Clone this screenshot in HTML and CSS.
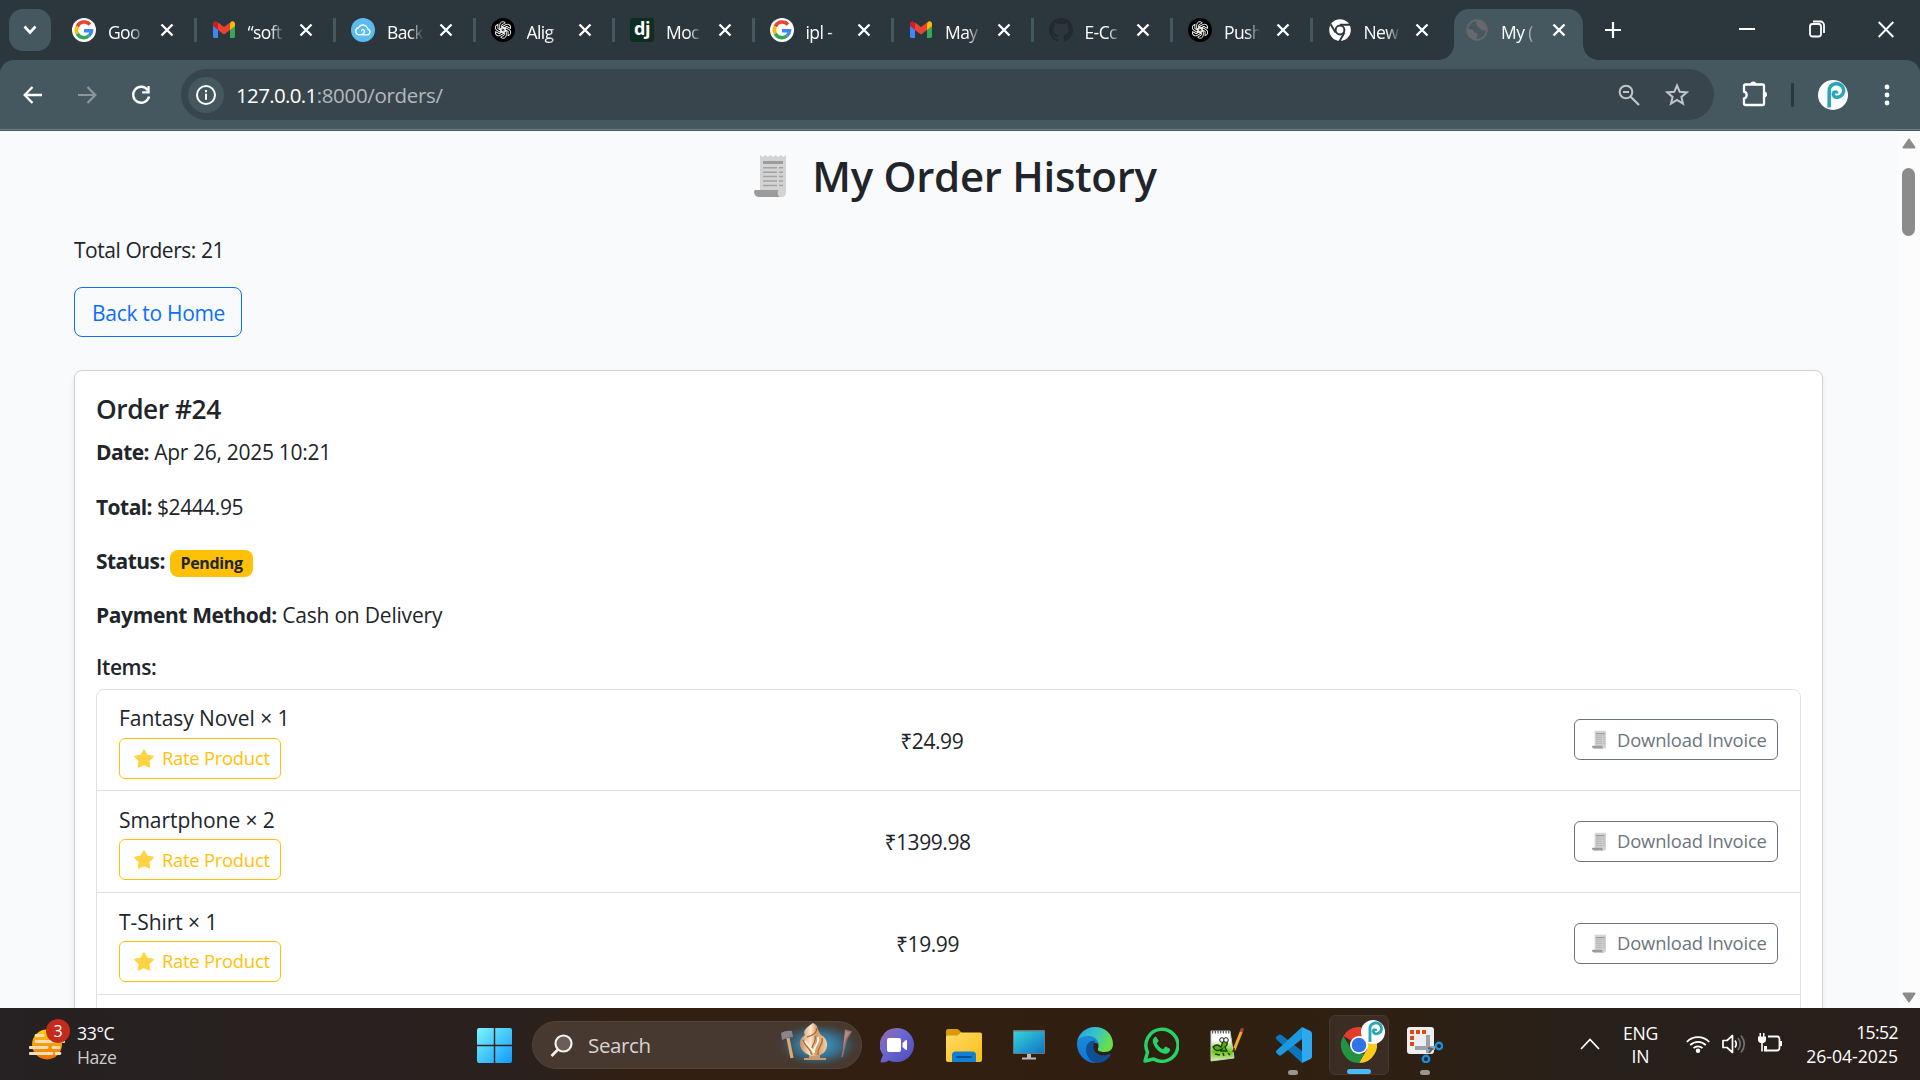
FILE: index.html
```html
<!DOCTYPE html>
<html lang="en">
<head>
<meta charset="utf-8">
<title>My Order History</title>
<link rel="stylesheet" href="styles.css">
</head>
<body>
<svg class="defs" width="0" height="0">
  <defs>
    <symbol id="close" viewBox="0 0 14 14"><path d="M1.5 1.5l11 11M12.5 1.5l-11 11" stroke="#fff" stroke-width="2.3" fill="none"/></symbol>
    <symbol id="google" viewBox="0 0 24 24"><circle cx="12" cy="12" r="12" fill="#fff"/><g fill="none" stroke-width="3.5"><path d="M17.9 6.6A7.6 7.6 0 0 0 5.3 8.4" stroke="#ea4335"/><path d="M5.3 8.4a7.6 7.6 0 0 0 0 7.2" stroke="#fbbc05"/><path d="M5.3 15.6a7.6 7.6 0 0 0 11.7 2.2" stroke="#34a853"/><path d="M17 17.8a7.6 7.6 0 0 0 2.500-5H12" stroke="#4285f4"/></g></symbol>
    <symbol id="gmail" viewBox="0 0 24 24"><path d="M1 7v11.500a1.600 1.600 0 0 0 1.600 1.600H6V9z" fill="#4285f4"/><path d="M23 7v11.500a1.600 1.600 0 0 1-1.600 1.600H18V9z" fill="#34a853"/><path d="M18 5.500V12l5-4V5.800c0-2.400-2.700-3.200-4.200-2z" fill="#fbbc04"/><path d="M6 5.500V12L1 8V5.800c0-2.400 2.700-3.200 4.200-2z" fill="#c5221f"/><path d="M6 12V4.500l6 4.600 6-4.600V12l-6 4.600z" fill="#ea4335"/></symbol>
    <symbol id="cloud" viewBox="0 0 24 24"><circle cx="12" cy="12" r="12" fill="#5bbcf0"/><path d="M8 16.800h8.300a2.900 2.900 0 0 0 .5-5.700A4.900 4.900 0 0 0 7.600 9.700 3.600 3.600 0 0 0 8 16.800zM8 16.800c4 0 5.600-1.700 5.300-3.800-.4-2-3.300-1.600-2.600.4" fill="none" stroke="#fff" stroke-width="1.300"/></symbol>
    <symbol id="gpt" viewBox="0 0 24 24"><circle cx="12" cy="12" r="12" fill="#000"/><g fill="none" stroke="#fff" stroke-width=".9"><path id="petal" d="M12.200 9.200 8.700 11.200V6.900a3.200 3.200 0 0 1 5.600-2.100L10.700 6.900v5.400"/><use href="#petal" transform="rotate(60 12 12)"/><use href="#petal" transform="rotate(120 12 12)"/><use href="#petal" transform="rotate(180 12 12)"/><use href="#petal" transform="rotate(240 12 12)"/><use href="#petal" transform="rotate(300 12 12)"/></g></symbol>
    <symbol id="github" viewBox="0 0 16 16"><path fill="#24292f" d="M8 0C3.580 0 0 3.580 0 8c0 3.540 2.290 6.530 5.470 7.590.4.070.55-.17.55-.38v-1.490c-2.010.37-2.530-.49-2.690-.94-.09-.23-.48-.94-.82-1.130-.28-.15-.68-.52-.01-.53.63-.01 1.080.58 1.230.82.72 1.210 1.870.87 2.330.66.070-.52.28-.87.51-1.070-1.780-.2-3.640-.89-3.640-3.950 0-.87.31-1.590.82-2.150-.08-.2-.36-1.020.08-2.120 0 0 .67-.21 2.200.82a7.400 7.400 0 0 1 4 0c1.530-1.040 2.200-.82 2.200-.82.44 1.100.16 1.920.08 2.120.51.56.82 1.270.82 2.150 0 3.070-1.870 3.750-3.650 3.950.29.25.54.73.54 1.480v2.200c0 .21.15.46.55.38A8 8 0 0 0 16 8c0-4.420-3.580-8-8-8z"/></symbol>
    <symbol id="chromew" viewBox="0 0 24 24"><circle cx="12" cy="12" r="10.800" fill="#fff"/><circle cx="12" cy="12" r="4.400" fill="none" stroke="#2c373d" stroke-width="2"/><path d="M12 6.800h10M7.500 14.600 2.600 6.200M16.500 14.600l-5 8.600" stroke="#2c373d" stroke-width="1.900"/></symbol>
    <symbol id="globe" viewBox="0 0 24 24"><circle cx="12" cy="12" r="9.800" fill="none" stroke="#68686b" stroke-width="1.800"/><path d="M3 11c4 0 6 1 6.500 3.500 2 0 3.500 1 3 3.500-.5 2-1.500 2.500-1.500 4C6 21.500 2.500 18 3 11zM12 2.500c-1 1.500-1.500 3-.5 4 1.500 1 .5 2.500 2 3 2 .5 2.500 3 4.500 3 1.500-.5 2.500-.5 3.500 0C22 6.500 17 2 12 2.500z" fill="#68686b"/></symbol>
    <symbol id="receipt" viewBox="0 0 32 42"><path d="M6 0l2.600 2L11.200 0l2.600 2 2.600-2L19 2l2.600-2 2.600 2 2.600-2 2.600 2L32 0v37c0 3-1.500 5-4 5h-4L6 35z" fill="#d3d3d3"/><path d="M2 35h22.500c-1.500 2-1 5 1 7H5c-4 0-5-4-5-5.500C0 35.500 1 35 2 35z" fill="#9b9b9b"/><path d="M9 6h20v3H9z" fill="#9b9b9b"/><path d="M9 12.800h14M25 12.800h4M9 17.200h14M25 17.200h4M9 21.600h14M25 21.600h4M9 26h14M25 26h4M9 30.500h14M25 30.500h4" stroke="#a3a3a3" stroke-width="1.500"/></symbol>
    <symbol id="star" viewBox="0 0 20 19"><path d="M10 1.500l2.600 5.200 5.900.9-4.200 4.100.9 5.800-5.200-2.700-5.200 2.700.9-5.800L1.500 7.600l5.900-.9z" fill="#fdd441" stroke="#fdd441" stroke-width="2.200" stroke-linejoin="round"/></symbol>
    <symbol id="pfav" viewBox="0 0 30 30"><circle cx="15" cy="15" r="15" fill="#fff"/><path d="M11.200 27.500V11.500a7.300 6.900 0 1 1 8.500 5.800c-3 .3-5-1.800-4.300-4 .5-1.700 3.200-1.700 3.300.2" fill="none" stroke="#2aa6b6" stroke-width="3.600"/></symbol>
    <linearGradient id="gw" x1="0" y1="0" x2="1" y2="1"><stop stop-color="#7df4fc"/><stop offset="1" stop-color="#0f9bfb"/></linearGradient>
    <linearGradient id="gsun" x1="0" y1="0" x2="0" y2="1"><stop stop-color="#ffcf0a"/><stop offset="1" stop-color="#ee6f06"/></linearGradient>
    <linearGradient id="gchat" x1="0" y1="0" x2="1" y2="1"><stop stop-color="#a566a4"/><stop offset=".4" stop-color="#6a68d0"/><stop offset="1" stop-color="#4e4bc0"/></linearGradient>
    <linearGradient id="gfold" x1="0" y1="0" x2="1" y2="1"><stop stop-color="#ffdb6a"/><stop offset="1" stop-color="#fbbd12"/></linearGradient>
    <linearGradient id="gmon" x1="0" y1="0" x2="1" y2="1"><stop stop-color="#33d5dc"/><stop offset="1" stop-color="#1173c4"/></linearGradient>
    <linearGradient id="gedge" x1="0" y1="0" x2="1" y2=".4"><stop stop-color="#1c9fe0"/><stop offset=".5" stop-color="#35c1d0"/><stop offset="1" stop-color="#66e04a"/></linearGradient>
    <linearGradient id="gedge2" x1="0" y1="0" x2="0" y2="1"><stop stop-color="#1a8ad8"/><stop offset="1" stop-color="#0c76d6"/></linearGradient>
    <radialGradient id="gglow"><stop stop-color="#3f9fd0"/><stop offset=".5" stop-color="#39708f"/><stop offset=".8" stop-color="#3f4a4e" stop-opacity=".8"/><stop offset="1" stop-color="#463830" stop-opacity="0"/></radialGradient>
    <linearGradient id="gart" x1="0" y1="0" x2="1" y2="0"><stop stop-color="#c98a5a"/><stop offset=".4" stop-color="#ffe9cc"/><stop offset=".6" stop-color="#d79a66"/><stop offset="1" stop-color="#f3cfa6"/></linearGradient>
    <linearGradient id="gnpp" x1="0" y1="0" x2="0" y2="1"><stop offset=".3" stop-color="#fff"/><stop offset=".7" stop-color="#6cc713"/><stop offset="1" stop-color="#d9f0b0"/></linearGradient>
  </defs>
</svg>

<header class="tabstrip">
  <div class="tabsearch"><svg width="14" height="10" viewBox="0 0 14 10"><path d="M1.500 1.500 7 7.500l5.500-6" fill="none" stroke="#fff" stroke-width="2.600"/></svg></div>
  <nav class="tabs">
    <div class="tab"><svg class="fav"><use href="#google"/></svg><span class="label">Goo</span><svg class="x"><use href="#close"/></svg></div>
    <div class="tab"><svg class="fav"><use href="#gmail"/></svg><span class="label">“soft</span><svg class="x"><use href="#close"/></svg></div>
    <div class="tab"><svg class="fav"><use href="#cloud"/></svg><span class="label">Back</span><svg class="x"><use href="#close"/></svg></div>
    <div class="tab"><svg class="fav"><use href="#gpt"/></svg><span class="label">Alig</span><svg class="x"><use href="#close"/></svg></div>
    <div class="tab"><span class="fav dj">dj</span><span class="label">Moc</span><svg class="x"><use href="#close"/></svg></div>
    <div class="tab"><svg class="fav"><use href="#google"/></svg><span class="label">ipl -</span><svg class="x"><use href="#close"/></svg></div>
    <div class="tab"><svg class="fav"><use href="#gmail"/></svg><span class="label">May</span><svg class="x"><use href="#close"/></svg></div>
    <div class="tab"><svg class="fav"><use href="#github"/></svg><span class="label">E-Cc</span><svg class="x"><use href="#close"/></svg></div>
    <div class="tab"><svg class="fav"><use href="#gpt"/></svg><span class="label">Push</span><svg class="x"><use href="#close"/></svg></div>
    <div class="tab last"><svg class="fav"><use href="#chromew"/></svg><span class="label">New</span><svg class="x"><use href="#close"/></svg></div>
    <div class="tab active"><svg class="fav"><use href="#globe"/></svg><span class="label">My (</span><svg class="x"><use href="#close"/></svg></div>
  </nav>
  <svg class="newtab" width="16" height="16" viewBox="0 0 16 16"><path d="M8 0v16M0 8h16" stroke="#fff" stroke-width="2.200"/></svg>
  <div class="wincontrols">
    <svg width="16" height="18" viewBox="0 0 16 18"><path d="M0 9h16" stroke="#fff" stroke-width="2"/></svg>
    <svg width="16" height="18" viewBox="0 0 16 18"><rect x="1" y="4" width="11" height="12.500" rx="2.500" fill="none" stroke="#fff" stroke-width="1.800"/><path d="M4 1.500h7.500A3.500 3.500 0 0 1 15 5v8" fill="none" stroke="#fff" stroke-width="1.800"/></svg>
    <svg width="16" height="18" viewBox="0 0 16 18"><path d="M.7 2l14.600 15M15.300 2l-14.600 15" stroke="#fff" stroke-width="1.900"/></svg>
  </div>
</header>

<div class="toolbar">
  <svg class="back" width="20" height="18" viewBox="0 0 20 18"><path d="M19 9H2M9.500 1 1.700 9l7.800 8" fill="none" stroke="#fff" stroke-width="2.300"/></svg>
  <svg class="fwd" width="20" height="18" viewBox="0 0 20 18"><path d="M1 9h17M10.500 1l7.800 8-7.800 8" fill="none" stroke="#8b979d" stroke-width="2.200"/></svg>
  <svg class="reload" width="20" height="20" viewBox="0 0 20 20"><path d="M16.800 5.200A8 8 0 1 0 18 11.500" fill="none" stroke="#fff" stroke-width="2.400"/><path d="M18.700 1v7.500h-7.500V6.200h5.200V1z" fill="#fff"/></svg>
  <div class="omnibox">
    <div class="info"><svg width="20" height="20" viewBox="0 0 20 20"><circle cx="10" cy="10" r="9" fill="none" stroke="#fff" stroke-width="2"/><path d="M10 8.800v6M10 5v2.200" stroke="#fff" stroke-width="2"/></svg></div>
    <div class="url"><b>127.0.0.1</b><span>:8000/orders/</span></div>
    <svg class="zoomout" width="22" height="22" viewBox="0 0 22 22"><circle cx="8" cy="8" r="6.300" fill="none" stroke="#c3c6c8" stroke-width="2"/><path d="M12.700 12.700 21 21M5 8h6" stroke="#c3c6c8" stroke-width="2.200"/></svg>
    <svg class="bookmark" width="24" height="23" viewBox="0 0 24 23"><path d="M12 2.500l2.700 6.300 6.900.6-5.200 4.500 1.600 6.700-6-3.600-6 3.600 1.600-6.700-5.200-4.500 6.900-.6z" fill="none" stroke="#c3c6c8" stroke-width="2"/></svg>
  </div>
  <svg class="ext" width="26" height="26" viewBox="0 0 26 26"><path d="M2.500 3.500h18q1.500 0 1.500 1.500v17.500q0 1.500-1.500 1.500h-17Q2 24 2 22.500v-5a3.500 3.500 0 0 0 0-6.800V5q0-1.500 1.500-1.500z" fill="none" stroke="#fff" stroke-width="2.300"/><path d="M8.300 3.500a3 3 0 0 1 6 0zM22 10.500a3 3 0 0 1 0 6z" fill="#fff"/></svg>
  <i class="sep"></i>
  <svg class="avatar" width="30" height="30"><use href="#pfav"/></svg>
  <svg class="menu" width="6" height="22" viewBox="0 0 6 22"><g fill="#fff"><circle cx="3" cy="3" r="2.400"/><circle cx="3" cy="11" r="2.400"/><circle cx="3" cy="19" r="2.400"/></g></svg>
</div>

<div class="viewport">
  <main class="page">
    <h1><svg width="32" height="42"><use href="#receipt"/></svg><span>My Order History</span></h1>
    <p class="count">Total Orders: 21</p>
    <a class="home">Back to Home</a>
    <section class="card">
      <h2>Order #24</h2>
      <p class="date"><strong>Date:</strong> Apr 26, 2025 10:21</p>
      <p class="total"><strong>Total:</strong> $2444.95</p>
      <p class="status"><strong>Status:</strong> <em>Pending</em></p>
      <p class="pay"><strong>Payment Method:</strong> Cash on Delivery</p>
      <h3>Items:</h3>
      <ul class="items">
        <li><div class="prod"><span>Fantasy Novel × 1</span><a class="rate"><svg width="20" height="19"><use href="#star"/></svg>Rate Product</a></div><span class="price">₹24.99</span><a class="invoice"><svg width="14" height="19" viewBox="0 0 32 42"><use href="#receipt" width="32" height="42"/></svg>Download Invoice</a></li>
        <li><div class="prod"><span>Smartphone × 2</span><a class="rate"><svg width="20" height="19"><use href="#star"/></svg>Rate Product</a></div><span class="price">₹1399.98</span><a class="invoice"><svg width="14" height="19" viewBox="0 0 32 42"><use href="#receipt" width="32" height="42"/></svg>Download Invoice</a></li>
        <li><div class="prod"><span>T-Shirt × 1</span><a class="rate"><svg width="20" height="19"><use href="#star"/></svg>Rate Product</a></div><span class="price">₹19.99</span><a class="invoice"><svg width="14" height="19" viewBox="0 0 32 42"><use href="#receipt" width="32" height="42"/></svg>Download Invoice</a></li>
        <li></li>
      </ul>
    </section>
  </main>
  <aside class="scrollbar">
    <svg width="14" height="11" viewBox="0 0 14 11"><path d="M7 1.500 12.500 9.500h-11z" fill="#8b8b8b" stroke="#8b8b8b" stroke-width="2" stroke-linejoin="round"/></svg>
    <i></i>
    <svg class="down" width="14" height="11" viewBox="0 0 14 11"><path d="M7 9.500 1.500 1.500h11z" fill="#8b8b8b" stroke="#8b8b8b" stroke-width="2" stroke-linejoin="round"/></svg>
  </aside>
</div>

<footer class="taskbar">
  <div class="weather">
    <div class="sun">
      <svg width="36" height="32" viewBox="0 0 36 32"><circle cx="18" cy="15.500" r="15" fill="url(#gsun)"/><path d="M7 6.500h7M7 12.500h28M1 18.500h17M24 18.500h6M1 24.500h22M27 24.500h4" stroke="#f6dfb8" stroke-width="2.800" stroke-linecap="round"/></svg>
      <b>3</b>
    </div>
    <div class="wtext"><span>33°C</span><span>Haze</span></div>
  </div>
  <div class="apps">
    <svg class="start" width="35" height="35" viewBox="0 0 35 35"><path d="M2 0h14.800v16.800H0V2q0-2 2-2zM18.200 0H33q2 0 2 2v14.800H18.200zM0 18.200h16.800V35H2q-2 0-2-2zM18.200 18.200H35V33q0 2-2 2H18.200z" fill="url(#gw)"/></svg>
    <div class="search">
      <svg class="mag" width="23" height="23" viewBox="0 0 23 23"><circle cx="13.500" cy="9.500" r="8" fill="#6b5e56" stroke="#f2f2f2" stroke-width="2.200"/><path d="M8 15.500 1.500 22" stroke="#f2f2f2" stroke-width="2.600"/></svg>
      <span>Search</span>
      <svg class="art" width="84" height="46" viewBox="0 0 84 46"><ellipse cx="42" cy="23" rx="42" ry="23" fill="url(#gglow)"/><path d="M12 16l4 20" stroke="#d9ab72" stroke-width="3.200"/><path d="M5 11q5-3 11-2l1 6q-6 0-11 3z" fill="#87868f"/><path d="M69 8l6 2-4 6-1 3-4 16" fill="#b58a83" stroke="#94706c" stroke-width="1.500"/><path d="M28 36h22v2H28zM33 32h11v6H33z" fill="#c79a70"/><path d="M37 1c6 2 4 8 8 12 4 2 7 7 6 11-1 8-8 10-13 10s-13-4-14-11c-1-5 2-8 5-10-3-4 2-8 8-12z" fill="url(#gart)"/><path d="M31 15c8-2 10-6 10-9M27 18c2 7 8 8 9 15M39 14c2 7-5 9-4 18M46 16c2 7-5 8-4 17" fill="none" stroke="#a66b3b" stroke-width="1.300"/><path d="M29 19c3 5 6 6 8 11M42 15c2 7-5 9-4 16" fill="none" stroke="#fff5e6" stroke-width="1.800"/></svg>
    </div>
    <svg class="chat" width="34" height="35" viewBox="0 0 34 35"><path d="M17 0a17 17 0 0 1 0 34Q12 34 9 32.500 5 35 1.500 34.500.3 34.300.8 32.500L3 27A17 17 0 0 1 17 0z" fill="url(#gchat)"/><rect x="7" y="10" width="14" height="14" rx="2" fill="#fff"/><path d="M22.500 15l3.500-3q1-.5 1 1v8q0 1.500-1 1l-3.500-3z" fill="#fff"/></svg>
    <svg class="folder" width="36" height="33" viewBox="0 0 36 33"><path d="M0 2q0-2 2-2h9q1 0 2 1l3 3v8H0z" fill="#d99a0b"/><path d="M0 8q0-1.500 1.500-1.500h10L15 3.500h19q2 0 2 2V31q0 2-2 2H2q-2 0-2-2z" fill="url(#gfold)"/><path d="M6 33v-7q0-3.500 3.500-3.500h17q3.500 0 3.500 3.500v7z" fill="#127fd3"/><path d="M11 28h14" stroke="#074f91" stroke-width="1.800" stroke-linecap="round"/></svg>
    <svg class="monitor" width="32" height="30" viewBox="0 0 32 30"><rect width="32" height="24" rx="1" fill="#71767b"/><rect x="1" y="1.500" width="30" height="21.500" fill="url(#gmon)"/><path d="M14 24h4v3.500h5V29.500H9v-2h5z" fill="#b8bcc0"/></svg>
    <svg class="edge" width="36" height="36" viewBox="0 0 36 36"><path d="M18 0C8 0 1.500 7 0 15c0 0 3-5.500 11-5.500 6 0 11 4.500 10.500 10 0 1.500-1 2-.5 3.500s4 2 7 2c5 0 8-3 8-8C36 7 28 0 18 0z" fill="url(#gedge)"/><path d="M0 16c1-4 5-7 11-7 6 0 10 3.500 10.500 8-7-4-13 2-11.500 9 1 5 5 8.500 9 10C8 36.500-.5 27 0 16z" fill="url(#gedge2)"/><path d="M18.500 14c-6-1-10 4-9.500 9.500S14 36 21 36c6-.5 10.500-4 12.500-8 .3-1-.5-1.300-1-1-6 3-15 1-16-6-.3-3 .5-5.500 2-7z" fill="#114f94"/></svg>
    <svg class="wa" width="36" height="36" viewBox="0 0 36 36"><path d="M2 34l2.500-8.800A16 16 0 1 1 10.700 32z" fill="none" stroke="#25d366" stroke-width="3.400" stroke-linejoin="round"/><path d="M13 9.500c-3 1-4 4-2.500 7.500 2 5 6.500 9 11 9.800 3.500.3 6-2 5.500-5l-4.600-2.200-2.300 2.600c-3-1.200-5.200-3.500-6.300-6l1.900-2.300z" fill="#25d366"/></svg>
    <svg class="npp" width="34" height="34" viewBox="0 0 34 34"><path d="M1 3h19l4 27L1 33z" fill="url(#gnpp)" stroke="#c9ccc5"/><path d="M2 4h18" stroke="#555" stroke-width="3" stroke-dasharray="1.200 1.500"/><path d="M3 19q4-4 8 0l2-6q3-2 4 1t-2 5l2 4h-6l1-2q-6 4-9-2z" fill="#54a81c" stroke="#1b3a0a" stroke-width="1.300"/><circle cx="12" cy="12" r="2.300" fill="#fff" stroke="#222"/><circle cx="16" cy="12" r="2.300" fill="#fff" stroke="#222"/><path d="M5 26l5 1M13 25l1 3M18 25l2 2" stroke="#1b3a0a" stroke-width="1.500"/><path d="M32 2 24 22" stroke="#f2ac22" stroke-width="3"/><path d="M32.500 0l-1.300 4" stroke="#a63d3d" stroke-width="3"/><path d="M24.300 20l-1.500 4" stroke="#333" stroke-width="1.500"/></svg>
    <div class="app vs"><svg width="37" height="36" viewBox="0 0 37 36"><path d="M27 0v36L2 13q-2-2-.5-3.500L3.500 8Q5 7 6.500 8L27 24z" fill="#0a77bd"/><path d="M27 0v12L6.500 28q-1.500 1-3 0l-2-2Q0 24.500 2 23z" fill="#1b98de"/><path d="M27 0l8.500 4q1.500 1 1.500 2.500v23q0 1.500-1.500 2.500L27 36z" fill="#2ea8f0"/></svg><i></i></div>
    <div class="app chrome"><svg width="36" height="36" viewBox="0 0 36 36"><path d="M18 18 2.400 9A18 18 0 0 1 33.600 9z" fill="#e33b2e"/><path d="M18 9h15.600A18 18 0 0 1 18 36l7.800-13.500z" fill="#fcc91d"/><path d="M2.400 9 10.200 22.500 18 27h5.200L18 36A18 18 0 0 1 2.400 9z" fill="#229342"/><circle cx="18" cy="18" r="9" fill="#fff"/><circle cx="18" cy="18" r="7.300" fill="#2f74e8"/></svg><svg class="mini" width="24" height="24" viewBox="0 0 30 30"><use href="#pfav" width="30" height="30"/></svg><i></i></div>
    <div class="app snip"><svg width="36" height="36" viewBox="0 0 36 36"><rect width="27" height="27" rx="3" fill="#eceef2"/><g fill="#dd4a12"><path d="M3 3h4v4H3zM9 3h4v4H9zM15 3h4v4h-4zM3 9h4v4H3zM3 15h4v4H3z"/></g><path d="M21 8v18M8 21h20" stroke="#9ba2aa" stroke-width="4"/><path d="M21 21l4 1-3 4" stroke="#59636b" stroke-width="2" fill="none"/><circle cx="32" cy="19" r="3.200" fill="none" stroke="#1a8fe0" stroke-width="2.400"/><circle cx="19" cy="32" r="3.200" fill="none" stroke="#1a8fe0" stroke-width="2.400"/></svg><i></i></div>
  </div>
  <div class="tray">
    <svg class="chev" width="20" height="12" viewBox="0 0 20 12"><path d="M1 11 10 1.500 19 11" fill="none" stroke="#fff" stroke-width="1.800"/></svg>
    <div class="lang"><span>ENG</span><span>IN</span></div>
    <svg class="wifi" width="24" height="18" viewBox="0 0 24 18"><g fill="none" stroke="#fff" stroke-width="1.800"><path d="M.8 7a15.500 15.500 0 0 1 22.400 0M4.200 10.200a11 11 0 0 1 15.600 0M7.500 13.200a6.400 6.400 0 0 1 9 0"/></g><circle cx="12" cy="15.800" r="2.200" fill="#fff"/></svg>
    <svg class="vol" width="24" height="20" viewBox="0 0 24 20"><path d="M1 6.500h4l5.500-5v17l-5.500-5H1z" fill="none" stroke="#fff" stroke-width="1.700" stroke-linejoin="round"/><path d="M13 6.500q2.500 3.500 0 7" fill="none" stroke="#fff" stroke-width="1.700"/><path d="M16 4q4.500 6 0 12M19 1.500q6.500 8.500 0 17" fill="none" stroke="#75706e" stroke-width="1.700"/></svg>
    <svg class="bat" width="24" height="20" viewBox="0 0 24 20"><path d="M10 3.500h9q2.500 0 2.500 2.500v9q0 2.500-2.500 2.500H8" fill="none" stroke="#fff" stroke-width="1.800"/><path d="M22 8h2v5h-2z" fill="#fff"/><path d="M0 3.500h8V7q0 2.500-2.500 3h-3Q0 9.500 0 7zM1.500 0h1.500v4H1.500zM5 0h1.500v4H5zM3.200 9.500h1.600v9H3.200zM6 13h3v5.500H6z" fill="#fff"/></svg>
    <div class="clock"><span class="t">15:52</span><span class="d">26-04-2025</span></div>
  </div>
</footer>
</body>
</html>
```

FILE: styles.css
```css
* { box-sizing: border-box; }
body {
  margin: 0;
  width: 1920px;
  height: 1080px;
  overflow: hidden;
  display: flex;
  flex-direction: column;
  font-family: "Open Sans", "Noto Sans", sans-serif;
  font-size: 21px;
  line-height: 32.4px;
  color: #212529;
  background: #2c373d;
}
h1, h2, h3, p, ul { margin: 0; padding: 0; }
svg { display: block; flex: none; }
.defs { position: absolute; }

/* tab strip */
.tabstrip { height: 60px; background: #2c373d; display: flex; flex: none; }
.tabsearch {
  width: 42px; height: 42px; margin: 9px 5px 0 9px; border-radius: 14px;
  background: #455860; display: flex; align-items: center; justify-content: center;
}
.tabs { display: flex; flex: none; }
.tab {
  width: 139.5px; padding: 0 22px 0 16px; display: flex; align-items: center;
  position: relative; color: #fff; font-size: 17.5px;
}
.tab::after {
  content: ""; position: absolute; right: -1px; top: 18px; width: 3px; height: 24px; background: #455860;
}
.tab.last::after { display: none; }
.fav { width: 24px; height: 24px; margin-right: 12px; flex: none; }
.dj {
  background: #0f2e22; border-radius: 3px; font-size: 18px; line-height: 20px;
  font-weight: 700; text-align: center; letter-spacing: -.5px;
}
.label {
  width: 38px; margin-right: auto; white-space: nowrap; line-height: 28px; padding-top: 3px;
  letter-spacing: -.6px;
  -webkit-mask-image: linear-gradient(90deg, #000 58%, transparent 96%);
  mask-image: linear-gradient(90deg, #000 58%, transparent 96%);
}
.x { width: 14px; height: 14px; }
.tab.active {
  width: 129px; margin: 9px 0 0 3px; padding: 0 17px 9px 11px; background: #455860;
  border-radius: 15px 15px 0 0;
}
.tab.active::before, .tab.active::after {
  content: ""; position: absolute; top: auto; bottom: 0; width: 15px; height: 15px;
  background: radial-gradient(circle at 0 0, transparent 14.5px, #455860 15px);
}
.tab.active::before { left: -15px; }
.tab.active::after { right: -15px; background: radial-gradient(circle at 100% 0, transparent 14.5px, #455860 15px); }
.newtab { margin: 22px 0 0 22px; }
.wincontrols { margin: 20px 26px 0 auto; display: flex; gap: 53.5px; }

/* toolbar */
.toolbar {
  height: 71px; flex: none; padding: 0 30px 2px 23px; display: flex; align-items: center;
  background: #455860; border-radius: 14px 14px 0 0;
  box-shadow: inset 0 -1px #455860, inset 0 -2px #6f818a;
}
.fwd { margin-left: 34px; }
.reload { margin: 0 30px 0 34px; }
.omnibox {
  width: 1533px; height: 51px; border-radius: 26px; background: #39454c; flex: none;
  display: flex; align-items: center; padding: 0 25px 0 7px; color: #fff;
}
.info {
  width: 36px; height: 36px; border-radius: 18px; background: #455860;
  display: flex; align-items: center; justify-content: center;
}
.url { margin: 0 auto 0 12px; font-size: 20.5px; padding-top: 1px; letter-spacing: -.32px; }
.url b { font-weight: 400; letter-spacing: -.65px; }
.url span { color: #b3b8bb; }
.bookmark { margin-left: 25px; }
.ext { margin-left: 28px; margin-top: -2px; }
.sep { width: 3px; height: 24px; background: #2c373d; margin: 0 24px 0 23px; border-radius: 1px; }
.menu { margin-left: auto; }

/* page */
.viewport { height: 877px; flex: none; display: flex; background: #f8f9fa; overflow: hidden; }
.page { flex: 1; padding: 0 74px; background: #f8fafc; }
h1 {
  height: 88px; padding: 20px 0 0 14px; display: flex; justify-content: center; gap: 26px;
  font-size: 42px; font-weight: 600; line-height: 50px; letter-spacing: -.3px;
}
h1 svg { margin-top: 4px; }
.count { padding-top: 15px; margin-bottom: -1px; letter-spacing: -.45px; }
.home {
  display: block; width: 168px; height: 50px; margin: 22px 0 33px; padding: 9px 0 0 17px;
  border: 1px solid #0d6efd; border-radius: 8px; color: #0d6efd; line-height: 32px; letter-spacing: -.3px;
}
.card {
  height: 900px; background: #fff; border: 1px solid #cfd1d3; border-radius: 8px; padding: 22px 21px;
  box-shadow: 0 3px 6px rgba(0, 0, 0, .075);
}
h2 { font-size: 26.3px; line-height: 32px; font-weight: 600; margin-bottom: 11px; letter-spacing: -.45px; }
.card p { height: 32px; line-height: 32px; margin-bottom: 22.3px; white-space: nowrap; letter-spacing: -.3px; }
.card p strong { font-weight: 700; letter-spacing: -.55px; }
.card .total { letter-spacing: -.45px; }
.card .pay { letter-spacing: -.2px; }
.card .pay strong { letter-spacing: -.38px; }
.status em {
  display: inline-block; height: 27px; width: 83px; text-align: center; background: #ffc107; border-radius: 8px;
  font: 700 16px/26px "Open Sans", sans-serif; letter-spacing: -.35px; vertical-align: 0;
}
h3 { font-size: 21px; font-weight: 600; line-height: 26px; margin: 0 0 9px; letter-spacing: -.4px; }
.items { list-style: none; border: 1px solid #dee2e6; border-radius: 8px; height: 600px; }
.items li {
  height: 101.7px; border-bottom: 1px solid #dee2e6; padding: 0 22px; display: flex;
  justify-content: space-between; align-items: center; white-space: nowrap;
}
.prod { display: flex; flex-direction: column; padding-top: 1px; letter-spacing: -.06px; }
.rate, .invoice {
  display: flex; align-items: center; border: 1px solid #ffc107; color: #ffc107; border-radius: 6px;
  height: 41px; font-size: 18.4px; padding-left: 15px; letter-spacing: -.25px;
}
.rate { width: 162px; margin-top: 3px; }
.rate svg { margin-right: 8px; margin-left: -1px; }
.invoice { width: 204px; border-color: #6c757d; color: #6c757d; padding-left: 17px; letter-spacing: -.16px; }
.invoice svg { margin-right: 11px; }
.price { letter-spacing: -.42px; padding-top: 2px; }
.scrollbar {
  width: 23px; background: #fcfcfc; display: flex; flex-direction: column; align-items: center; padding: 7px 0 5px;
}
.scrollbar i { width: 13px; height: 68px; margin-top: 19px; background: #8b8b8b; border-radius: 7px; }
.scrollbar .down { margin-top: auto; }

/* taskbar */
.taskbar {
  height: 72px; flex: none; display: flex; color: #fff; font-size: 17.6px;
  background: linear-gradient(90deg, #262122 0, #2a211e 27%, #331f11 34%, #311f11 52%, #2e2012 72%, #27201b 84%, #291f1c 100%);
}
.weather { display: flex; padding: 21px 0 0 29px; width: 477px; }
.sun { position: relative; width: 48px; }
.sun b {
  position: absolute; left: 17px; top: -10px; width: 24px; height: 24px; border-radius: 12px; background: #c42b1c;
  font-size: 16px; font-weight: 400; line-height: 24px; text-align: center;
}
.wtext { display: flex; flex-direction: column; line-height: 24px; margin-top: -8px; letter-spacing: -.35px; }
.wtext span:last-child { color: #cfccca; }
.apps { display: flex; align-items: center; padding-top: 2px; }
.search {
  width: 330px; height: 48px; border-radius: 24px; margin: 0 18px 0 20px; background: #473930;
  border: 1px solid #524439; display: flex; align-items: center; padding-left: 17px; font-size: 20.5px; color: #d8d3d0;
  letter-spacing: -.35px;
}
.search span { margin-left: 15px; }
.art { margin: 0 1px 0 auto; }
.folder { margin-left: 32px; }
.monitor { margin-left: 31px; }
.edge { margin-left: 32px; }
.wa { margin-left: 30px; }
.npp { margin: 0 21px 0 31px; }
.app {
  position: relative; width: 60px; height: 60px; display: flex; align-items: center; justify-content: center;
  border-radius: 6px;
}
.app i { position: absolute; left: 25px; bottom: 0; width: 10px; height: 5px; border-radius: 3px; background: #9c9590; }
.vs { margin-right: 6px; margin-left: -2px; }
.chrome { background: #3b2d23; border: 1px solid #463930; }
.chrome i { width: 24px; left: 17px; background: #4cb8f8; }
.mini { position: absolute; left: 31px; top: 4px; }
.snip { margin-left: 6px; }
.tray { margin-left: auto; display: flex; padding-right: 22px; }
.chev { margin: 30px 23px 0 0; }
.lang { width: 35px; text-align: center; display: flex; flex-direction: column; line-height: 23px; padding-top: 14px; letter-spacing: -.2px; }
.wifi { margin: 27px 0 0 28px; }
.vol { margin: 26px 0 0 12px; }
.bat { margin: 25px 0 0 12px; }
.clock {
  width: 116px; text-align: right; display: flex; flex-direction: column; line-height: 23.5px; padding-top: 13px;
}
.clock .t { letter-spacing: -.6px; }
.clock .d { white-space: nowrap; }
```
